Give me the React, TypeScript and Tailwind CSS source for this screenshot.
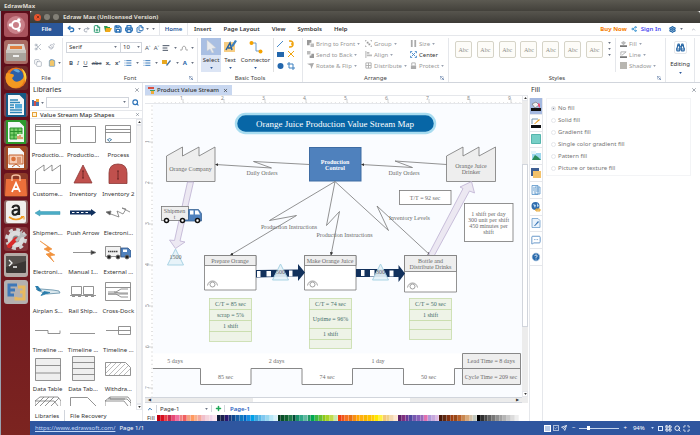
import { useState } from "react";
import {
  AlignLeft,
  Binoculars,
  Check,
  ChevronUp,
  Clipboard,
  Copy,
  FilePlus,
  Files,
  HelpCircle,
  LayoutGrid,
  List,
  Maximize,
  MessageSquareMore,
  Paintbrush,
  Plus,
  Printer,
  Redo2,
  Save,
  Scissors,
  Search,
  Send,
  Settings,
  Share2,
  Undo2,
  X,
} from "lucide-react";

const palette = [
  "#c00010 #d80f20 #e84048 #c8284c #e84878 #f070a0 #f08080 #f06060 #f4a080 #ff9a60 #f8b090 #f4a8a0 #f0c0cc #f4d4dc #f0d4ec #fce4f0",
  "#101c40 #1c2050 #281870 #183878 #104890 #1860a8 #1078c0 #0068c8 #1890e0 #00a0e8 #40a8e0 #58b8e8 #80c8f0 #98d8f0 #b8e8f8 #d8f0fa",
  "#083820 #085028 #106030 #207848 #004c38 #189068 #30a888 #60b8a0 #209860 #00a850 #40b840 #68c030 #90c818 #a8d428 #c0dc50 #c8e8b0",
  "#f03c10 #f05818 #f47020 #e87010 #f89010 #ffa800 #ffb010 #f8b800 #ffc000 #ffd000 #ffe800 #fff040 #f4c878 #f0d088 #f4d8b0 #ffe8d0",
  "#602068 #803080 #683898 #5048a0 #7858b0 #8860b8 #9868b8 #e070b0 #b098d8 #c8a8dc #e0b8e4",
  "#481808 #602810 #803010 #a04010 #984818 #b86028 #c88850 #d8a878 #d0c0a8 #c0c8c0",
  "#000000 #303030 #484848 #606060 #787878 #909090 #a0a0a0 #b4b4b4 #c8c8c8 #dcdcdc #eeeeee",
].join(" ").split(" ");

function Caret({ className = "text-gray-500" }) {
  return (
    <svg viewBox="0 0 4 3" className={`h-[2px] w-[3px] shrink-0 ${className}`}>
      <path d="M0 0h4L2 3z" fill="currentColor" />
    </svg>
  );
}

/* ---------- launcher ---------- */

function Tile({ name, className = "", children }) {
  return (
    <button aria-label={name} className={`h-6 w-6 shrink-0 overflow-hidden rounded-[3px] ${className}`}>
      <svg viewBox="0 0 24 24" className="h-6 w-6">
        {children}
      </svg>
    </button>
  );
}

function Doc({ color, children }) {
  return (
    <>
      <path d="M3 1h13l5 5v17H3z" fill="#f5f8fa" stroke={color} strokeWidth="2" />
      <path d="M15 0h7v7z" fill={color} />
      {children}
    </>
  );
}

function Launcher() {
  return (
    <nav className="w-[30px] shrink-0 border-l border-gray-400 bg-gradient-to-b from-[#5b0d19] via-[#6d1520] to-[#7c2420]">
      <div className="flex h-[293px] flex-col items-center justify-between pt-[2px]">
        <Tile name="Dash" className="bg-[#a8525c]">
          <circle cx="12" cy="12" r="9" fill="#c98088" />
          <circle cx="12" cy="12" r="4" fill="none" stroke="#fff" strokeWidth="2" />
          <circle cx="6.4" cy="12" r="1.7" fill="#fff" />
          <circle cx="14.8" cy="7" r="1.7" fill="#fff" />
          <circle cx="14.8" cy="17" r="1.7" fill="#fff" />
        </Tile>
        <Tile name="Files" className="bg-[#a86a62]">
          <path d="M4 4h16l2 8H2z" fill="#d9d4cd" />
          <path d="M6 6h12v3H6z" fill="#e08040" />
          <rect x="2" y="10" width="20" height="11" rx="1" fill="#a9a49d" />
          <path d="M2 10h20v3H2z" fill="#c9c5bf" />
          <path d="M9 15h6v2H9z" fill="#eee" />
        </Tile>
        <Tile name="Firefox" className="bg-[#6c2a28]">
          <circle cx="12" cy="12" r="10.5" fill="#e8761c" />
          <circle cx="12.5" cy="10" r="7" fill="#2b5fa8" />
          <path d="M2 8c2-2 4 0 6 0 3 0 2 3 0 4 2 5 8 5 12-1 1 7-4 11-9 11S0 17 2 8z" fill="#f39a21" />
          <path d="M17 2c5 3 7 9 4 14-1-6-1-10-4-14z" fill="#fbcf3c" />
          <path d="M9 4c3-2 6-1 7 2-2 1-4 0-7-2z" fill="#63a8dc" />
        </Tile>
        <Tile name="Writer" className="bg-[#7f4450]">
          <Doc color="#175a86">
            <path d="M6 7h8M6 9.500h10M6 12h4M6 14.500h4M6 17h12M6 19.500h12" stroke="#2f86b8" strokeWidth="1.3" />
            <path d="M11 11h7v4.500h-7z" fill="#54aadb" />
          </Doc>
        </Tile>
        <Tile name="Calc" className="bg-[#71544c]">
          <Doc color="#2d9a2e">
            <path d="M6 8h12v11H6z" fill="#7ad06a" stroke="#28912a" />
            <path d="M6 11.500h12M6 15h12M10 8v11M14 8v11" stroke="#28912a" />
            <path d="M13 14h7v6h-7z" fill="#e3f5d9" />
            <path d="M14 19v-3M16 19v-4M18 19v-2" stroke="#d46b2a" strokeWidth="1.2" />
          </Doc>
        </Tile>
        <Tile name="Impress" className="bg-[#8a4d3e]">
          <Doc color="#a34a22">
            <path d="M5 9h14v9H5z" fill="#f6cdb6" stroke="#c4622f" />
            <circle cx="9.5" cy="13" r="2.3" fill="#d9713a" />
            <path d="M13 12h4M13 14h4M13 16h4M8 21l4-3 4 3" stroke="#c4622f" fill="none" />
          </Doc>
        </Tile>
        <Tile name="Software" className="bg-[#8d3a28]">
          <path d="M2 6h20l1 17H1z" fill="#ec6f3a" />
          <path d="M8 8V4q0-2 4-2t4 2v4" fill="none" stroke="#f7c3a4" strokeWidth="1.5" />
          <path d="M8 19l4-9 4 9M9 16h6" fill="none" stroke="#fff" strokeWidth="1.8" />
        </Tile>
        <Tile name="Amazon" className="bg-[#8f6664]">
          <rect x="2" y="1" width="20" height="22" rx="2" fill="#f1efed" />
          <path d="M8.500 8Q9 5.500 12 5.500t3 3V15M15 9.500q-7 0-6.500 3 .5 3 3.500 2 3-1 3-4" fill="none" stroke="#222" strokeWidth="2.2" />
          <path d="M5 17q7 5 14 0" fill="none" stroke="#f39a1e" strokeWidth="1.6" />
          <path d="M17 16.500h3v3" fill="none" stroke="#f39a1e" />
        </Tile>
        <Tile name="Settings" className="bg-[#85343a]">
          <circle cx="12" cy="12" r="8.5" fill="#dcdcdc" />
          <circle cx="12" cy="12" r="9.5" fill="none" stroke="#d2d2d2" strokeWidth="3" strokeDasharray="4 3.46" />
          <circle cx="12" cy="12" r="3.5" fill="#8c8c8c" />
          <path d="M5 19l7-7" stroke="#d82a2a" strokeWidth="4" strokeLinecap="round" />
          <path d="M11 13l5-5q-1-4 3-5l-1 3 2 2 3-1q-1 4-5 3l-5 5z" fill="#b9b9b9" />
        </Tile>
        <Tile name="Terminal" className="bg-[#b5aaa6]">
          <rect x="2" y="3" width="20" height="17" rx="1" fill="#3a3634" />
          <path d="M2 3h20v5L2 14z" fill="#55504d" />
          <path d="M5 7l3 3-3 3M9 14h4" fill="none" stroke="#f2f2f2" strokeWidth="1.3" />
        </Tile>
        <Tile name="EdrawMax" className="bg-[#b4b0b0]">
          <path d="M13 5H5v5h6M5 10v5h5" fill="none" stroke="#3f78b8" strokeWidth="3" />
          <path d="M14 7h6v5h-4M20 11v8h-8v-2" fill="none" stroke="#e8b860" strokeWidth="3" />
        </Tile>
      </div>
    </nav>
  );
}

/* ---------- menu and ribbon ---------- */

function MenuBar() {
  return (
    <div className="flex h-[13px] shrink-0 items-center border-b border-gray-200 bg-white text-[#333]">
      <button className="mr-1 h-[13px] w-[33px] bg-[#2b579a] font-semibold text-white">File</button>
      <div className="flex w-[92px] items-center justify-between pr-1 text-[#2f74b8]">
        <Undo2 size={8} strokeWidth={4} />
        <Caret />
        <Redo2 size={7} strokeWidth={3} className="text-gray-400" />
        <FilePlus size={8} strokeWidth={3} className="text-[#2a9a70]" />
        <svg viewBox="0 0 8 8" className="h-2 w-2">
          <path d="M0 1h3l1 1h2v4H1z" fill="#2f9a50" />
          <path d="M2 3h6L6 7H1z" fill="#f0a818" />
        </svg>
        <Save size={8} strokeWidth={4} />
        <Printer size={8} strokeWidth={4} />
        <Files size={8} strokeWidth={3} />
        <Caret />
        <Caret />
      </div>
      <button className="h-[13px] w-[29px] border-x border-gray-200 font-semibold text-[#2b579a]">Home</button>
      <div className="flex flex-1 items-center gap-3 pl-[6px]">
        <button className="font-semibold">Insert</button>
        <button className="font-semibold">Page Layout</button>
        <button className="font-semibold">View</button>
        <button className="font-semibold">Symbols</button>
        <button className="font-semibold">Help</button>
      </div>
      <div className="flex items-center gap-1 pr-1">
        <a href="#buy" className="font-bold text-[#f57c00]">Buy Now</a>
        <Share2 size={6} strokeWidth={3} className="text-[#2f8fd0]" />
        <a href="#sign-in" className="font-semibold text-[#4848f0]">Sign In</a>
        <Settings size={7} strokeWidth={4} className="ml-1 text-[#2468a8]" />
        <Caret />
        <ChevronUp size={5} className="ml-1 text-gray-500" />
      </div>
    </div>
  );
}

function RibbonGroup({ title, launch = false, className = "", children }) {
  return (
    <section className={`flex shrink-0 flex-col border-r border-gray-200 ${className}`}>
      <div className="flex h-9 items-start">{children}</div>
      <div className="relative h-2 text-center text-[#444]">
        {title}
        {launch && (
          <svg viewBox="0 0 6 6" className="absolute right-1 top-[2px] h-1 w-1 text-[#35598f]">
            <path d="M0 5V0h5M2 2l3 3M6 2v4H2" fill="none" stroke="currentColor" />
          </svg>
        )}
      </div>
    </section>
  );
}

function ArrangeItem({ label, on = false, children }) {
  return (
    <button className={`flex h-[11px] items-center gap-[2px] whitespace-nowrap ${on ? "text-[#333]" : "text-[#999]"}`}>
      <svg viewBox="0 0 8 8" className="h-[7px] w-[7px] shrink-0">
        {children}
      </svg>
      <span>{label}</span>
      {!on && <Caret className="text-gray-400" />}
    </button>
  );
}

function Ribbon() {
  const [font, setFont] = useState("Serif");
  const [size, setSize] = useState("10");

  return (
    <div className="flex h-[47px] shrink-0 overflow-hidden border-b border-gray-300 bg-white pt-[2px]">
      <RibbonGroup title="File" className="w-[33px]">
        <div className="grid w-full grid-cols-2 gap-y-2 pl-1 pt-[5px] text-gray-400">
          <Scissors size={8} />
          <Paintbrush size={7} />
          <Copy size={8} />
          <span className="flex items-center gap-[2px] text-[#5b8fc7]">
            <Clipboard size={8} fill="#f2c66a" />
            <Caret />
          </span>
        </div>
      </RibbonGroup>

      <RibbonGroup title="Font" launch className="w-[135px]">
        <div className="flex w-full flex-col gap-1 pl-[3px] pt-1">
          <div className="flex h-[11px] items-center">
            <div className="relative">
              <select
                aria-label="Font"
                value={font}
                onChange={(e) => setFont(e.target.value)}
                className="block h-[11px] w-[55px] appearance-none border border-gray-300 bg-white pl-[2px] leading-[9px]"
              >
                <option>Serif</option>
                <option>Sans</option>
              </select>
              <span className="pointer-events-none absolute right-1 top-1"><Caret /></span>
            </div>
            <div className="relative">
              <select
                aria-label="Font size"
                value={size}
                onChange={(e) => setSize(e.target.value)}
                className="block h-[11px] w-[21px] appearance-none border border-l-0 border-gray-300 bg-white pl-[2px] leading-[9px]"
              >
                <option>10</option>
                <option>12</option>
              </select>
              <span className="pointer-events-none absolute right-[2px] top-1"><Caret /></span>
            </div>
            <div className="flex flex-1 items-center justify-between px-[3px] text-gray-600">
              <button>A˄</button>
              <button>A˅</button>
              <AlignLeft size={8} strokeWidth={3} />
              <Caret />
              <svg viewBox="0 0 8 6" className="h-[6px] w-2">
                <path d="M0 5h2q0-4 2-4t2 4h2" fill="none" stroke="#aaa" />
              </svg>
              <Caret />
            </div>
          </div>
          <div className="flex h-[11px] items-center justify-between px-[3px] text-gray-600">
            <button className="font-bold">B</button>
            <button className="italic">I</button>
            <button className="underline">U</button>
            <button className="line-through">abc</button>
            <button className="font-bold">x,</button>
            <button className="font-bold">x'</button>
            <List size={8} strokeWidth={3} className="text-[#3f7fbf]" />
            <Caret />
            <List size={8} strokeWidth={3} className="text-[#3f7fbf]" />
            <Caret />
            <svg viewBox="0 0 9 7" className="h-[7px] w-[9px]">
              <path d="M0 1h5v4H0z" fill="#e8a820" />
              <path d="M4 6l4-5 1 1-4 5z" fill="#47719f" />
            </svg>
            <Caret />
            <button className="font-bold text-[#2b66a8]">A</button>
            <Caret />
          </div>
        </div>
      </RibbonGroup>

      <RibbonGroup title="Basic Tools" className="w-[105px]">
        <button className="ml-[3px] flex h-[34px] w-5 flex-col items-center bg-[#dce5f5]">
          <span className="mb-px flex h-[17px] w-full items-center justify-center bg-[#a9bfe3]">
            <svg viewBox="0 0 10 13" className="h-[13px] w-[10px]">
              <path d="M1 0l9 8-4 .5 2 4-2 .5-2-4-3 2z" fill="#e9ebee" stroke="#c4c8ce" strokeWidth=".5" />
            </svg>
          </span>
          <span className="mb-[3px]">Select</span>
          <Caret className="text-[#2b579a]" />
        </button>
        <button className="flex h-[34px] w-[18px] flex-col items-center">
          <span className="mb-px flex h-[17px] items-center">
            <svg viewBox="0 0 13 13" className="h-[13px] w-[13px]">
              <path d="M0 2h11v10H0z" fill="#f7cd83" />
              <path d="M2 10l4-7 2 7M4 8h4" fill="none" stroke="#24619f" strokeWidth="1.5" />
              <path d="M7 6l4-6 2 1-4 6z" fill="#3e80bd" />
            </svg>
          </span>
          <span className="mb-[3px]">Text</span>
          <Caret className="text-[#2b579a]" />
        </button>
        <button className="flex h-[34px] w-[33px] flex-col items-center">
          <span className="mb-px flex h-[17px] items-center">
            <svg viewBox="0 0 14 14" className="h-[14px] w-[14px]">
              <path d="M2 3h5v8h5" fill="none" stroke="#6b9bcb" />
              <circle cx="2.5" cy="3" r="2" fill="#f5a200" />
              <circle cx="11.5" cy="11.5" r="2" fill="#f5a200" />
            </svg>
          </span>
          <span className="mb-[3px]">Connector</span>
          <Caret className="text-[#2b579a]" />
        </button>
        <svg viewBox="0 0 28 34" className="h-[34px] w-7">
          <path d="M1.500 0v34" stroke="#e0e0e0" />
          <path d="M5 9l6-6" stroke="#4a8ac8" />
          <path d="M5 14h7v5H5z" fill="#2367ad" />
          <circle cx="8.5" cy="28" r="3" fill="#2367ad" />
          <path d="M17 3h1q3 0 3 3t-3 3h-1M21 6h-2" fill="none" stroke="#f0a410" strokeWidth="1.5" />
          <path d="M16 13l6 6M22 13l-6 6" stroke="#f0a410" />
          <path d="M17 24v6h6M15 26h6v6" fill="none" stroke="#3d80c0" />
        </svg>
      </RibbonGroup>

      <RibbonGroup title="Arrange" launch className="w-[146px]">
        <div className="flex w-[58px] flex-col pl-1">
          <ArrangeItem label="Bring to Front"><path d="M0 0h5v3H3v3H0z" fill="#999" /><path d="M4 4h4v4H4z" fill="#bbb" /></ArrangeItem>
          <ArrangeItem label="Send to Back"><path d="M0 0h4v4H0z" fill="#bbb" /><path d="M5 3h3v5H3V5h2z" fill="#999" /></ArrangeItem>
          <ArrangeItem label="Rotate & Flip"><path d="M0 2l8-1-3 7-1-4z" fill="#aaa" /></ArrangeItem>
        </div>
        <div className="flex w-[45px] flex-col pl-1">
          <ArrangeItem label="Group"><path d="M0 2V0h2M6 0h2v2M8 6v2H6M2 8H0V6" fill="none" stroke="#999" /><path d="M2 2h2v2H2zM4 4h2v2H4z" fill="#999" /></ArrangeItem>
          <ArrangeItem label="Align"><path d="M1 0v8" stroke="#aaa" /><path d="M2 1h3v2H2zM2 4h6v2H2z" fill="#bbb" /></ArrangeItem>
          <ArrangeItem label="Distribute"><path d="M1 1h6v6H1zM4 1v6M1 4h6" fill="none" stroke="#aaa" /></ArrangeItem>
        </div>
        <div className="flex flex-col pl-1">
          <ArrangeItem label="Size"><path d="M1 0h2v8H1zM5 0h2v8H5z" fill="#aaa" /></ArrangeItem>
          <ArrangeItem label="Center" on><path d="M.5 2.500v-2h2M5.500.5h2v2M7.500 5.500v2h-2M2.500 7.500h-2v-2M2 2l4 4M6 2L2 6" fill="none" stroke="#3f84c6" /></ArrangeItem>
          <ArrangeItem label="Protect"><path d="M1 4h6v4H1z" fill="#aaa" /><path d="M2 4V1h4v3" fill="none" stroke="#aaa" /></ArrangeItem>
        </div>
      </RibbonGroup>

      <RibbonGroup title="Styles" launch className="min-w-[216px] flex-1">
        <div className="flex flex-1 justify-between pl-[6px] pt-[3px]">
          {[0, 1, 2, 3, 4, 5, 6].map((n) => (
            <button key={n} className="h-[17px] w-[17px] rounded-[2px] border border-[#d6d4c8] bg-[#fdfcf8] font-['Liberation_Serif',serif] text-[#8e8e88]">
              Abc
            </button>
          ))}
        </div>
        <div className="flex h-[34px] w-[13px] flex-col items-center gap-1 border-r border-gray-200 pt-1">
          <Caret />
          <Caret />
          <Caret />
        </div>
        <div className="flex w-[49px] flex-col pl-1">
          <ArrangeItem label="Fill"><path d="M0 6h8v2H0z" fill="#777" /><path d="M1 3l3-2 3 2-3 3z" fill="#bbb" /></ArrangeItem>
          <ArrangeItem label="Line"><path d="M0 6h8v2H0z" fill="#777" /><path d="M1 5V1h6M2 5l5-4" fill="none" stroke="#aaa" /></ArrangeItem>
          <ArrangeItem label="Shadow"><path d="M0 0h8v8H0z" fill="#b8b6b0" /></ArrangeItem>
        </div>
      </RibbonGroup>

      <section className="mr-[5px] flex w-[29px] shrink-0 flex-col items-center border-r border-gray-200 pt-[3px]">
        <span className="mb-[6px] flex h-[13px] w-[13px] items-center justify-center rounded-[2px] border border-gray-200">
          <Binoculars size={9} strokeWidth={3} className="text-[#2867a5]" />
        </span>
        <button className="mb-1">Editing</button>
        <Caret className="text-[#2b579a]" />
      </section>
    </div>
  );
}

/* ---------- shape library ---------- */

const shapes = [
  { label: "Productio...", art: <path d="M.5 3.500h25v19H.5zM.5 5.500h25M.5 9.500h25" /> },
  { label: "Productio...", art: <path d="M.5 5.500h25v16H.5z" /> },
  { label: "Process", art: <><path d="M.5 4.500h25v17H.5zM.5 8.500h25M.5 11.500h25" /><path d="M2 19q3-3 5 0M3 19q1 3 3 0" stroke="#286a98" /></> },
  { label: "Custome...", art: <path d="M.5 23.500V11L9 5v6l8-6v6l8.500-6v18.500z" /> },
  { label: "Inventory", art: <><path d="M13 5l9 18H4z" fill="#c0504d" stroke="#8c3836" /><path d="M12 11h2M13 11v7M12 18h2" stroke="#5e2020" /></> },
  { label: "Inventory 2", art: <><path d="M4 23.500V13q0-9 9-9t9 9v10.500z" fill="#c0504d" stroke="#8c3836" /><path d="M12 11h2M13 11v8M12 19h2" stroke="#5e2020" /></> },
  { label: "Shipmen...", art: <path d="M0 14l5-3v1.500h20v3H5V17z" fill="#4bacc6" stroke="#3d98b0" strokeWidth=".5" /> },
  { label: "Push Arrow", art: <><path d="M0 11.500h21V10l5 3.500-5 3.500v-1.500H0z" fill="#10305e" stroke="none" /><path d="M2 13.500h18" stroke="#fff" strokeWidth="1.2" strokeDasharray="2.5 2" /></> },
  { label: "Electroni...", art: <><path d="M3 14l11 4-2-6 6 3 3-5-4-1 8 4" /><path d="M1 13l5-1-1 4z" fill="#555" /></> },
  { label: "Electroni...", art: <path d="M5 3l12 8-4 2 7 4-5 1 4 6-8-8 5-1-7-4 4-2z" fill="#f4933c" stroke="#e88228" strokeWidth=".5" /> },
  { label: "Manual I...", art: <><path d="M3 14.500h19" /><path d="M21 12.500l5 2-5 2z" fill="#333" /></> },
  { label: "External ...", art: <><path d="M.5 8.500h15v10H.5z" fill="#f2f2f2" /><path d="M16 10h7l3 3v6H16z" fill="#4f81bd" stroke="#35598a" /><path d="M18 11.500h4V14h-4z" fill="#fff" stroke="none" /><path d="M3 13.500h10" stroke="#444" strokeWidth="1.5" strokeDasharray="1.5 .5" /><circle cx="4" cy="19" r="2" fill="#222" /><circle cx="13" cy="19" r="2" fill="#222" /><circle cx="22" cy="19" r="2" fill="#222" /></> },
  { label: "Airplan S...", art: <><path d="M1 12l3 2 8 3 13-1-1-2-6-1-12-1z" fill="#dbe8ee" stroke="#5e8ba5" /><path d="M9 14.500l-3 4 9-3z" fill="#2b7dac" stroke="#2b7dac" /><path d="M0 9l3 5h4L3 9z" fill="#2b7dac" stroke="none" /></> },
  { label: "Rail Ship...", art: <><path d="M1.500 9.500h10v8h-10zM13.500 9.500h10v8h-10zM0 18.500h26" /><path d="M2 19.500h3M8 19.500h3M15 19.500h3M21 19.500h3" /></> },
  { label: "Cross-Dock", art: <path d="M.5 5.500h25v18H.5zM.5 10.500h25M3 15h8l5-3h7M3 17h20M3 17h8l5 3h7M9 15l6 1h8" /> },
  { label: "Timeline ...", art: <path d="M0 14.500h13v3h12v-3" /> },
  { label: "Timeline ...", art: <path d="M0 17.500h25" /> },
  { label: "Timeline ...", art: <path d="M1 14.500h12M13.500 10.500h12v8h-12zM13.500 14.500h12" /> },
  { label: "Data Table", art: <path d="M.5 3.500h25v22H.5zM.5 10.500h25M.5 18h25" fill="#efefef" /> },
  { label: "Data Tab...", art: <path d="M2.500 1.500h22v24h-22zM2.500 7.500h22M2.500 13.500h22M2.500 19.500h22" fill="#efefef" /> },
  { label: "Withdra...", art: <><path d="M.5 7.500h20l5 5v8H.5z" /><path d="M1 13l5-5M1 18L11 8M4 20L16 8M9 20L20 9M14 20l9-9M19 20l6-6" strokeWidth=".5" /></> },
  { label: "", art: <path d="M0 12V7l5-4h18l3 4v5M0 12L9 3M5 12l9-9M10 12l9-9M16 12l8-8M0 7h19l4 5" /> },
  { label: "", art: <path d="M.5 12V3.500h17L26 12" /> },
  { label: "", art: <path d="M0 12V7l5-4h18l3 4v5M0 7h19l4 5M5 3v2h17l4 4M3 5h17" /> },
];

function ScrollArrow({ up = false }) {
  return (
    <span className="flex h-[6px] w-full shrink-0 items-center justify-center border border-gray-200 bg-white">
      <svg viewBox="0 0 4 3" className="h-[2px] w-[3px]">
        <path d={up ? "M0 3h4L2 0z" : "M0 0h4L2 3z"} fill="#333" />
      </svg>
    </span>
  );
}

function Libraries() {
  const [query, setQuery] = useState("");

  return (
    <aside className="flex w-[113px] shrink-0 flex-col border-r border-gray-200 bg-white text-[#333]">
      <div className="flex h-3 items-center justify-between pl-[3px] pr-[2px] pt-[2px] text-[7px]">
        <h2>Libraries</h2>
        <X size={6} className="text-gray-600" />
      </div>
      <div className="flex h-[15px] items-center gap-[2px] px-[2px]">
        <svg viewBox="0 0 7 7" className="h-[7px] w-[7px]">
          <path d="M0 1h2v6H0z" fill="#3b78b8" />
          <path d="M2 2h2v5H2z" fill="#d05048" />
          <path d="M4 0h3v3H4z" fill="#eda83c" />
          <path d="M4 3h3v4H4z" fill="#4477b4" />
        </svg>
        <Caret />
        <div className="relative flex-1">
          <input
            aria-label="Search shapes"
            value={query}
            onChange={(e) => setQuery(e.target.value)}
            className="block h-[11px] w-full border border-gray-300 px-[2px] outline-none"
          />
          <span className="pointer-events-none absolute right-[3px] top-1"><Caret /></span>
        </div>
        <Search size={7} strokeWidth={4} className="mx-px text-[#2f74b8]" />
      </div>
      <div className="flex h-[9px] items-center border-y border-gray-200 pl-[2px] pr-[2px]">
        <span className="mr-[3px] h-[5px] w-[5px] border border-[#e6a23a] bg-[#fff3d8]" />
        <h3 className="flex-1 font-medium">Value Stream Map Shapes</h3>
        <X size={5} className="text-gray-600" />
      </div>
      <div className="flex min-h-0 flex-1">
        <ul className="grid flex-1 auto-rows-[39px] grid-cols-3 overflow-hidden pt-[2px]">
          {shapes.map((shape, i) => (
            <li key={i} className="flex flex-col items-center whitespace-nowrap">
              <svg viewBox="0 0 26 30" className="h-[30px] w-[26px]" fill="none" stroke="#777" strokeWidth=".8">
                {shape.art}
              </svg>
              <span className="leading-[9px]">{shape.label}</span>
            </li>
          ))}
        </ul>
        <div className="flex w-[6px] flex-col bg-[#eee]">
          <ScrollArrow up />
          <span className="flex-1 border border-gray-200 bg-[#f4f4f4]" />
          <ScrollArrow />
        </div>
      </div>
      <div className="flex h-[11px] items-center">
        <button className="h-full w-[35px] border-r border-gray-300">Libraries</button>
        <button className="ml-[5px]">File Recovery</button>
      </div>
    </aside>
  );
}

/* ---------- drawing ---------- */

function Label({ x, y, lines, fill = "#6c6c6c", bold = false }) {
  return (
    <text x={x} y={y} textAnchor="middle" fill={fill} fontWeight={bold ? 700 : 400}>
      {lines.map((line, i) => (
        <tspan key={i} x={x} y={y + i * 6}>
          {line}
        </tspan>
      ))}
    </text>
  );
}

function Operator({ x, y }) {
  return (
    <g fill="none" stroke="#777" strokeWidth=".7">
      <circle cx={x} cy={y + 0.5} r="2.5" />
      <path d={`M${x - 5} ${y + 1.5}Q${x - 4} ${y - 3} ${x} ${y - 3}T${x + 5} ${y + 1.5}`} />
    </g>
  );
}

function Inventory({ x, y, count }) {
  return (
    <g>
      <path d={`M${x} ${y}l8 16h-16z`} fill="#e5f2f8" fillOpacity=".92" stroke="#a9d3e4" />
      <text x={x} y={y + 10} textAnchor="middle" fill="#666">{count}</text>
    </g>
  );
}

function DataBox({ x, stops, values }) {
  return (
    <g>
      {values.map((value, i) => (
        <g key={i}>
          <rect x={x} y={stops[i]} width="42" height={stops[i + 1] - stops[i]} fill="#eef3e7" stroke="#c6dba9" strokeWidth=".8" />
          <Label x={x + 21} y={(stops[i] + stops[i + 1]) / 2 + 2} lines={[value]} fill="#456e6a" />
        </g>
      ))}
    </g>
  );
}

function Drawing() {
  return (
    <svg
      viewBox="153 104 368 294"
      preserveAspectRatio="xMinYMin meet"
      className="block h-[294px] w-[368px] shrink-0 font-['Liberation_Serif',serif] text-[6px]"
    >
      <defs>
        <marker id="arrow" viewBox="0 0 4 4" refX="3.5" refY="2" markerWidth="4" markerHeight="4" orient="auto">
          <path d="M0 0l4 2-4 2z" fill="#333" />
        </marker>
      </defs>

      <rect x="236" y="114" width="199" height="19" rx="9.5" fill="#0766a6" stroke="#a8dcf0" strokeWidth="2.5" />
      <text x="335" y="127" textAnchor="middle" fill="#fff" className="text-[9px]">
        Orange Juice Production Value Stream Map
      </text>

      <g fill="#eee" stroke="#777" strokeWidth=".8">
        <path d="M166.500 181.500V156l16-9v9l16.500-9v9l16-9v34.500z" />
        <path d="M446.500 181.500V156l16.500-9v9l16-9v9l16.500-9v34.500z" />
      </g>
      <Label x={190.5} y={171} lines={["Orange Company"]} />
      <Label x={471} y={168} lines={["Orange Juice", "Drinker"]} />

      <rect x="309.5" y="147.5" width="51.5" height="33.5" fill="#4f81bd" stroke="#3e6ca3" />
      <Label x={335} y={163.5} lines={["Production", "Control"]} fill="#fff" bold />

      <g fill="none" stroke="#777" strokeWidth=".8">
        <path d="M309.500 164.500L253.500 161.500 271.500 168 215.500 164.500" markerEnd="url(#arrow)" />
        <path d="M446.500 164.500L395 161 412.500 167.500 361.500 164.500" markerEnd="url(#arrow)" />
        <path d="M335 181.500L269.500 220.500 296.500 215.500 230.500 255" markerEnd="url(#arrow)" />
        <path d="M335 181.500L326.500 225.500 339.500 211.500 331 255" markerEnd="url(#arrow)" />
        <path d="M335 181.500L388.500 230.500 377 206 430 255" markerEnd="url(#arrow)" />
      </g>
      <Label x={262} y={175} lines={["Daily Orders"]} />
      <Label x={404} y={175} lines={["Daily Orders"]} />
      <Label x={289} y={229} lines={["Production Instructions"]} />
      <Label x={344.5} y={237} lines={["Production Instructions"]} />
      <Label x={409.5} y={220} lines={["Inventory Levels"]} />

      <g fill="#fff" stroke="#777" strokeWidth=".8">
        <rect x="399.5" y="190.5" width="51.5" height="14" />
        <rect x="464.5" y="203.5" width="48.5" height="38" />
      </g>
      <Label x={425} y={199.5} lines={["T/T = 92 sec"]} />
      <Label x={488.5} y={215.5} lines={["1 shift per day", "300 unit per shift", "450 minutes per", "shift"]} />

      <g fill="#ece8f2" stroke="#bdb0d2" strokeWidth=".8">
        <path d="M187.500 182h6L180 241l5 1-9.500 6.500-6-8.500 5 .5z" />
        <path d="M428.500 254.500L463 188.500l-3-1.500 11.500-5.500 3 11.500-5-2-36 66z" />
      </g>

      <rect x="161.5" y="206.5" width="27" height="14" fill="#eee" stroke="#777" strokeWidth=".8" />
      <path d="M188.500 209.500h10l3 4v7.500h-20v-1h7z" fill="#4f81bd" stroke="#3c6695" strokeWidth=".8" />
      <path d="M190 210.500h3.500v4H190zM195 210.500h3l2 4h-5z" fill="#fff" />
      {[166.5, 182.5, 197.5].map((cx) => (
        <circle key={cx} cx={cx} cy="220.5" r="2" fill="#fff" stroke="#111" strokeWidth="1.5" />
      ))}
      <Label x={174.5} y={213} lines={["Shipmen", "t"]} />
      <Inventory x={175.5} y={249} count="1500" />

      <g stroke="#777" strokeWidth=".8">
        <path d="M204.500 255.500h51.500V290h-51.500zM304.500 255.500h51.500V290h-51.500zM404.500 255.500h52V292h-52z" fill="#fff" />
        <path d="M204.500 255.500h51.500v10h-51.500zM304.500 255.500h51.500v10h-51.500zM404.500 255.500h52v16h-52z" fill="#eee" />
      </g>
      <Label x={230} y={263} lines={["Prepare Orange"]} />
      <Label x={330} y={263} lines={["Make Orange Juice"]} />
      <Label x={430.5} y={262.5} lines={["Bottle and", "Distribute Drinks"]} />
      <Operator x={212.5} y={284} />
      <Operator x={312.5} y={284} />
      <Operator x={412.5} y={286} />

      <g fill="#12315c">
        <path d="M256 270l42-.5V264l7 8.500-7 8.500v-4.500l-42 1z" />
        <path d="M356 269h42.500v-4l6.500 8.500-6.500 8.500v-5H356z" />
        <path d="M257 271h3.500v6H257zM266.500 271h4.500v5.500h-4.500zM289 270.500h3.500v6H289zM361 270h3.500v6H361zM370 270h4.500v6.500H370zM389.500 270.500h4v6h-4z" fill="#fff" />
      </g>
      <Inventory x={280.5} y={264} count="500" />
      <Inventory x={380.5} y={264} count="300" />

      <DataBox x={209.5} stops={[298.5, 309.5, 320.5, 331.5, 341.5]} values={["C/T = 85 sec", "scrap = 5%", "1 shift", ""]} />
      <DataBox x={309.5} stops={[298.5, 309.5, 328.5, 339.5, 348.5]} values={["C/T = 74 sec", "Uptime = 96%", "1 shift", ""]} />
      <DataBox x={409.5} stops={[298.5, 309.5, 320.5, 329.5, 339.5]} values={["C/T = 50 sec", "1 shift", "", ""]} />

      <path d="M153 353.500h310v15h-8.500v16h-51v-16h-51v16h-51v-16h-50.500v16h-51v-16h-47z" fill="#fff" />
      <path
        d="M153 368.500h47.500v16H251v-16h51v16h50.500v-16h51v16h51v-16h8"
        fill="none"
        stroke="#888"
      />
      <path d="M462.500 353.500h58v31h-58zM462.500 368.500h58" fill="#eee" stroke="#888" />
      <Label x={175} y={363} lines={["5 days"]} />
      <Label x={276.5} y={363} lines={["2 days"]} />
      <Label x={378} y={363} lines={["1 day"]} />
      <Label x={225.5} y={378.5} lines={["85 sec"]} />
      <Label x={327} y={378.5} lines={["74 sec"]} />
      <Label x={428.5} y={378.5} lines={["50 sec"]} />
      <Label x={491} y={363} lines={["Lead Time = 8 days"]} />
      <Label x={491} y={378.5} lines={["Cycle Time = 209 sec"]} />
    </svg>
  );
}

function Ruler({ vertical = false }) {
  const marks = vertical ? 7 : 9;
  const start = vertical ? 38 : 30;
  const ticks = Array.from({ length: vertical ? 73 : 92 }, (_, i) => (start % 4) + i * 4.1);

  return (
    <svg
      viewBox={vertical ? "0 0 8 294" : "0 0 376 8"}
      className={vertical ? "h-[294px] w-2 shrink-0 bg-white" : "h-2 w-[376px] bg-white"}
    >
      <path
        d={ticks.map((t) => (vertical ? `M6 ${t}h2` : `M${t + 8} 6v2`)).join("")}
        stroke="#ccc"
        strokeWidth=".6"
      />
      {Array.from({ length: marks }, (_, i) => {
        const p = start + i * 41;
        return (
          <g key={i}>
            <path d={vertical ? `M3 ${p}h5` : `M${p + 8} 3v5`} stroke="#bbb" strokeWidth=".6" />
            <text
              fill="#888"
              className="text-[5px]"
              transform={vertical ? `translate(4 ${p + 1}) rotate(-90)` : `translate(${p + 5} 4)`}
            >
              {i + 1}
            </text>
          </g>
        );
      })}
    </svg>
  );
}

function Canvas() {
  const [page, setPage] = useState("Page-1");

  return (
    <main className="ml-[2px] flex min-w-0 flex-1 flex-col bg-white">
      <div className="mt-[2px] flex h-[10px] w-[87px] shrink-0 items-center gap-[2px] bg-[#c8d7f0] pl-[3px] text-[#333]">
        <svg viewBox="0 0 7 8" className="h-2 w-[7px]">
          <path d="M0 1h6v2H0z" fill="#d9503f" />
          <path d="M2 4h5v1H2z" fill="#3f9c60" />
          <path d="M3 5h3v3H3z" fill="#f0ab3a" />
        </svg>
        <span className="font-medium">Product Value Stream</span>
        <X size={5} strokeWidth={3} className="ml-[2px]" />
      </div>
      <div className="flex min-h-0 flex-1">
        <div className="flex min-w-0 flex-1 flex-col">
          <div className="h-[9px] shrink-0 overflow-hidden border-y border-gray-200">
            <Ruler />
          </div>
          <div className="flex min-h-0 flex-1 overflow-hidden bg-[#fafcff]">
            <Ruler vertical />
            <Drawing />
          </div>
          <div className="flex h-[6px] shrink-0 border-y border-gray-300 bg-[#ececec]">
            <span className="w-2 text-center text-[4px] leading-[4px]">◀</span>
            <span className="ml-[100px] w-[157px] bg-white" />
            <span className="ml-auto w-[6px] text-[4px] leading-[4px]">▶</span>
          </div>
        </div>
        <div className="flex w-[6px] flex-col bg-[#ececec]">
          <ScrollArrow up />
          <span className="mt-[63px] h-[163px] border border-gray-300 bg-white" />
          <span className="flex-1" />
          <ScrollArrow />
          <span className="h-[6px]" />
        </div>
      </div>
      <div className="flex h-[11px] shrink-0 items-center pl-[2px]">
        <ChevronUp size={6} strokeWidth={4} className="text-[#2468a8]" />
        <div className="relative ml-[3px] border-l border-gray-300">
          <select
            aria-label="Page"
            value={page}
            onChange={(e) => setPage(e.target.value)}
            className="block h-2 w-[54px] appearance-none bg-white pl-[3px] leading-[8px]"
          >
            <option>Page-1</option>
          </select>
          <span className="pointer-events-none absolute right-[3px] top-[3px]"><Caret /></span>
        </div>
        <button aria-label="Add page" className="flex w-[14px] justify-center border-x border-gray-300 text-[#1fa858]">
          <Plus size={7} strokeWidth={5} />
        </button>
        <button className="ml-[5px] font-semibold text-[#2b62c0]">Page-1</button>
      </div>
      <div className="flex h-[7px] shrink-0 items-center gap-[2px] pl-[2px]">
        <span className="w-[8px] leading-[6px]">Fill</span>
        <div className="flex h-[6px] w-[362px]">
          {palette.map((color, i) => (
            <span key={i} className="flex-1 border-r border-white/30" style={{ backgroundColor: color }} />
          ))}
        </div>
      </div>
    </main>
  );
}

/* ---------- fill pane ---------- */

const fills = ["No fill", "Solid fill", "Gradient fill", "Single color gradient fill", "Pattern fill", "Picture or texture fill"];

const paneTabs = [
  <><path d="M0 7h10v3H0z" fill="#111" /><path d="M1 3l4-2 3 3-4 3z" fill="#eee" stroke="#666" strokeWidth=".6" /><path d="M7 2l2 1v4L7 5z" fill="#e8507c" /></>,
  <><path d="M0 7h10v3H0z" fill="#111" /><path d="M1 6V1h6" fill="none" stroke="#7898b0" /><path d="M3 6l5-5 1 1-5 4z" fill="#eaa020" /></>,
  <path d="M.5.500h9v9h-9z" fill="#76cfc6" stroke="#56b5ac" />,
  <><path d="M1 2h9v7H1z" fill="#9dd7ec" /><path d="M1 9l3-5 3 2 3 3z" fill="#2b8c58" /><path d="M0 0h5v3H0z" fill="#e6f4fa" /></>,
  <><path d="M0 0h8v8H0z" fill="#3e5f92" /><path d="M2 3h8v7H2z" fill="#f3c26a" /></>,
  <path d="M1 .5h6v9H1zM4 2h5v7H4zM5 4h3M5 6h3M2 3h1M2 5h1" fill="#e8f2fb" stroke="#5b94c8" strokeWidth=".8" />,
  <><circle cx="4.5" cy="4" r="4" fill="#2f6cae" /><path d="M2 2l3 1-1 3zM6 1l2 3-2 1z" fill="#bcdcf4" /><path d="M4 8h5M5 7h4v2H5z" fill="none" stroke="#e8ab3c" /></>,
  <><path d="M1 .5h6l2 2v7H1z" fill="#e8f2fb" stroke="#6b9dcc" strokeWidth=".8" /><path d="M3 8l4-5 1 1-4 4z" fill="#3976b6" /></>,
];

function FillPane() {
  const [fill, setFill] = useState("No fill");

  return (
    <aside className="flex w-[172px] shrink-0 flex-col bg-white text-[#777]">
      <div className="flex h-[15px] items-start justify-between pl-[3px] pr-[3px] pt-[3px] text-[7px] text-[#333]">
        <h2>Fill</h2>
        <X size={6} className="mt-px text-gray-600" />
      </div>
      <div className="flex flex-1">
        <div className="ml-px w-[14px] border-x border-gray-200">
          <div className="grid h-[168px] grid-rows-10">
            {paneTabs.map((art, i) => (
              <button
                key={i}
                className={`flex items-center justify-center border-b border-gray-200 ${i === 0 ? "bg-[#a5b9e0]" : ""}`}
              >
                <svg viewBox="0 0 10 10" className="h-[10px] w-[10px]">{art}</svg>
              </button>
            ))}
            <button className="flex items-center justify-center border-b border-gray-200">
              <MessageSquareMore size={10} className="text-[#4a83be]" />
            </button>
            <button className="flex items-center justify-center border-b border-gray-200">
              <HelpCircle size={10} fill="#2769ac" className="text-white" />
            </button>
          </div>
        </div>
        <fieldset className="ml-[3px] mr-[9px] flex h-[78px] flex-1 flex-col border border-gray-100 pl-[4px] pt-[3px]">
          {fills.map((name) => (
            <label key={name} className="flex h-3 items-center gap-[2px]">
              <input
                type="radio"
                name="fill"
                checked={fill === name}
                onChange={() => setFill(name)}
                className="h-[5px] w-[5px] appearance-none rounded-full border border-gray-200 checked:border-2 checked:bg-gray-500"
              />
              {name}
            </label>
          ))}
        </fieldset>
      </div>
    </aside>
  );
}

function StatusBar() {
  const [zoom, setZoom] = useState(94);

  return (
    <footer className="flex h-[14px] shrink-0 items-center bg-[#2f569f] pl-[5px] text-white">
      <a href="https://www.edrawsoft.com/" className="text-[#c4d8f8] underline">https://www.edrawsoft.com/</a>
      <span className="ml-1 flex-1">Page 1/1</span>
      <div className="flex w-[156px] items-center gap-[2px]">
        <span className="h-[7px] w-[7px] border border-white bg-[#b8cbe8]" />
        <Check size={6} strokeWidth={3} className="border border-white/60" />
        <Send size={6} strokeWidth={3} />
        <span className="ml-[3px]">−</span>
        <input
          type="range"
          aria-label="Zoom"
          min="10"
          max="400"
          value={zoom}
          onChange={(e) => setZoom(Number(e.target.value))}
          className="mx-[2px] h-1 w-[40px] appearance-none bg-[linear-gradient(#c4d3ec,#c4d3ec)] bg-[length:100%_1px] bg-center bg-no-repeat [&::-webkit-slider-thumb]:h-1 [&::-webkit-slider-thumb]:w-[3px] [&::-webkit-slider-thumb]:appearance-none [&::-webkit-slider-thumb]:bg-white"
        />
        <span>+</span>
        <span className="ml-1">{zoom}%</span>
        <Caret className="ml-1 mr-[2px] text-blue-200" />
        <span className="h-[5px] w-[5px] border border-blue-100" />
        <LayoutGrid size={7} strokeWidth={3} />
        <Search size={7} strokeWidth={3} />
        <Maximize size={7} strokeWidth={3} />
      </div>
    </footer>
  );
}

export default function App() {
  return (
    <div className="flex h-screen flex-col overflow-hidden bg-white font-['Noto_Sans',sans-serif] text-[6px] leading-[8px] text-[#333]">
      <header className="flex h-[11px] shrink-0 items-center bg-gradient-to-b from-[#5c5a52] to-[#43413b] pl-1 font-bold text-[#dfdbd2]">
        EdrawMax
      </header>
      <div className="flex min-h-0 flex-1">
        <Launcher />
        <div className="flex min-w-0 flex-1 flex-col">
          <div className="flex h-3 shrink-0 items-center gap-[3px] rounded-t-[3px] bg-gradient-to-b from-[#57554e] to-[#3d3b36] pl-1">
            <span className="flex h-[7px] w-[7px] items-center justify-center rounded-full bg-[#e8552d]">
              <X size={4} strokeWidth={4} className="text-[#5e2010]" />
            </span>
            <span className="h-[6px] w-[6px] rounded-full bg-[#827f76]" />
            <span className="h-[6px] w-[6px] rounded-full bg-[#827f76]" />
            <h1 className="ml-px text-[6px] font-bold text-[#dfdbd2]">Edraw Max (Unlicensed Version)</h1>
          </div>
          <MenuBar />
          <Ribbon />
          <div className="flex min-h-0 flex-1">
            <Libraries />
            <Canvas />
            <FillPane />
          </div>
          <StatusBar />
        </div>
      </div>
    </div>
  );
}
